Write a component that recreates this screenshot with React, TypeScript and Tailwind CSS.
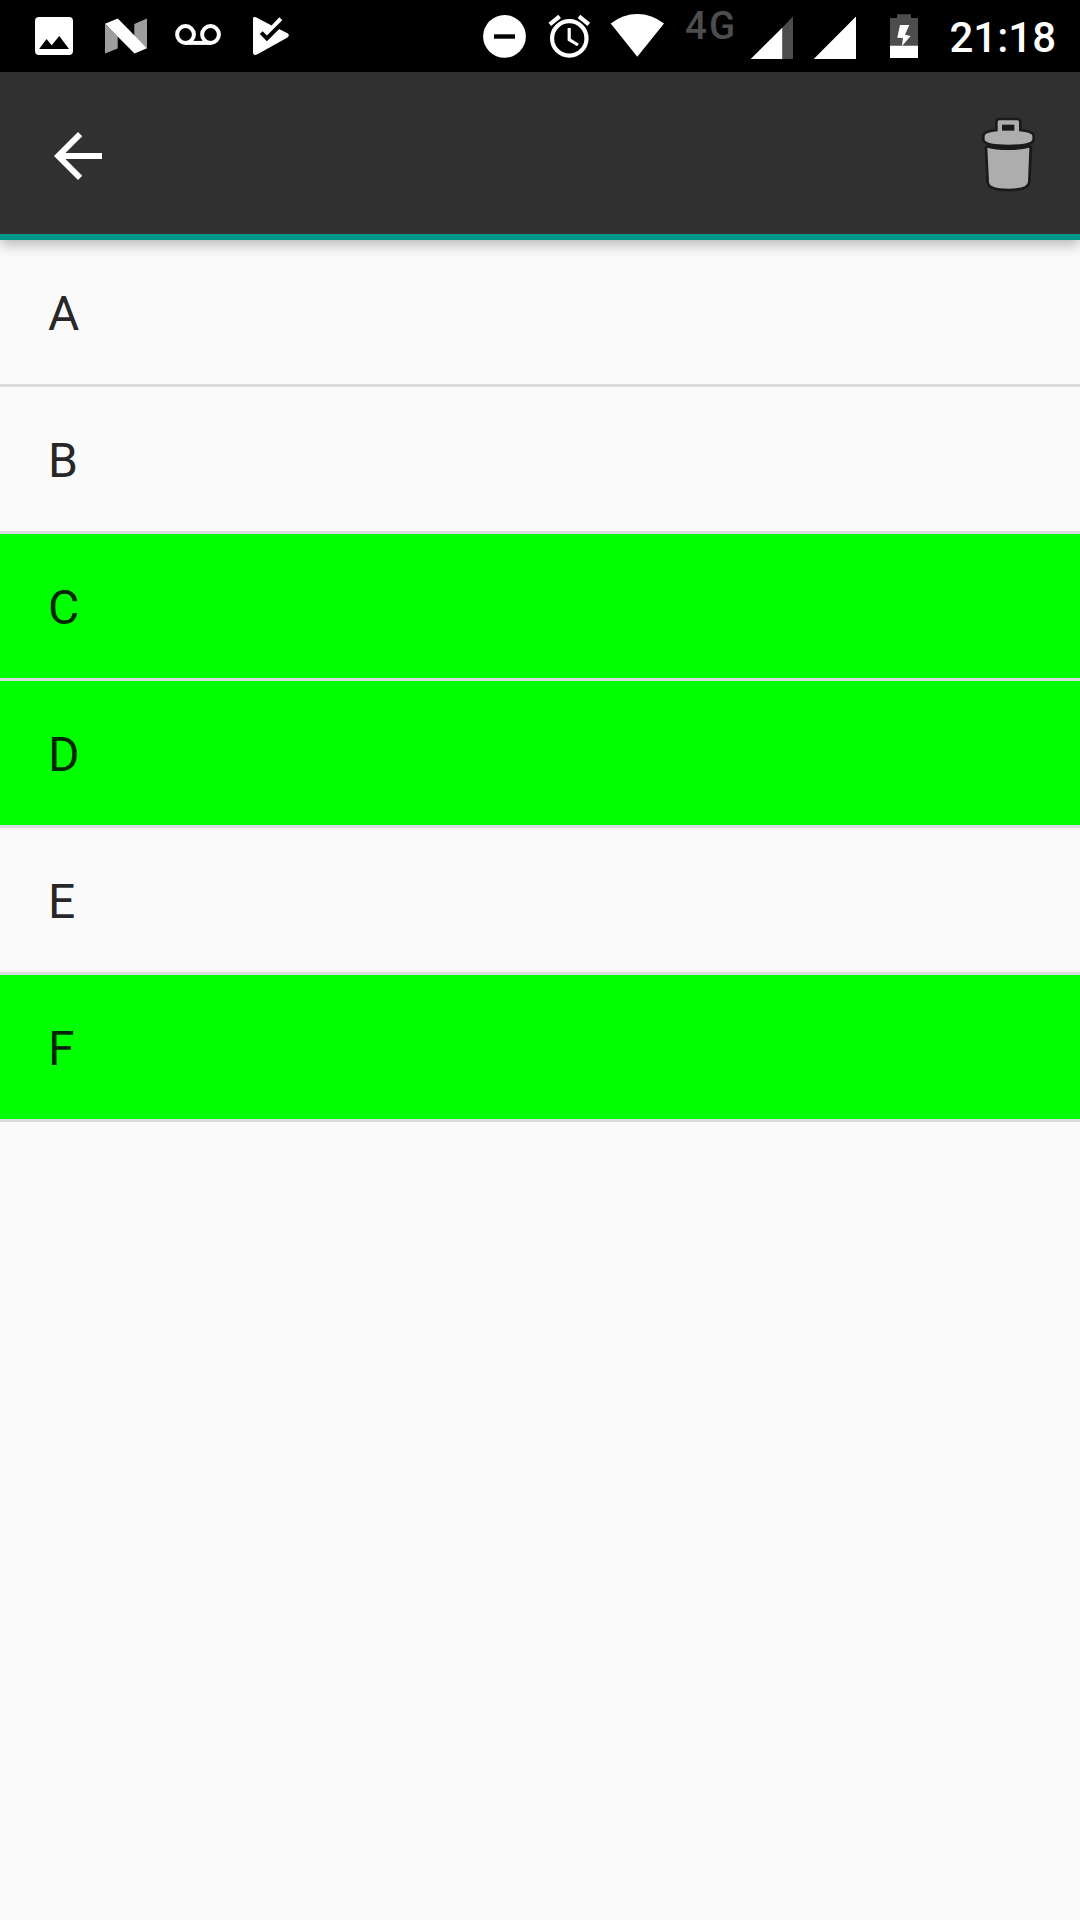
const rows = [
  { label: 'A', selected: false },
  { label: 'B', selected: false },
  { label: 'C', selected: true },
  { label: 'D', selected: true },
  { label: 'E', selected: false },
  { label: 'F', selected: true },
];

function StatusBar() {
  return (
    <div className="flex h-[72px] w-full bg-black pl-[35px] pr-6 text-white">
      <svg className="h-[72px] w-[38px] shrink-0" viewBox="35 0 38 72" fill="currentColor">
        <path fillRule="evenodd" d="M39 17H69a4 4 0 0 1 4 4V51a4 4 0 0 1-4 4H39a4 4 0 0 1-4-4V21a4 4 0 0 1 4-4ZM39.2 49H69L59.3 36 51.7 45.3 46.5 39Z" />
      </svg>
      <svg className="ml-8 h-[72px] w-[42px] shrink-0" viewBox="105 0 42 72">
        <path fill="#9e9e9e" d="M105 24L117.7 36.5V48.5L105 53.5ZM134.3 24L147 18.5V48.3L134.3 36Z" />
        <path fill="#fff" d="M105 23.8L117.8 18.5L147 48.3L134.5 53.5Z" />
      </svg>
      <svg className="ml-7 h-[72px] w-[46px] shrink-0" viewBox="175 0 46 72" fill="none" stroke="currentColor" strokeWidth="4">
        <circle cx="185.5" cy="34.5" r="8.4" />
        <circle cx="210.5" cy="34.5" r="8.4" />
        <path d="M185.5 42.9H210.5" />
      </svg>
      <svg className="ml-8 h-[72px] w-[36px] shrink-0" viewBox="253 0 36 72">
        <path fill="#fff" d="M253 18.5Q253 16.5 256 17.3L271.6 25.4L279.3 17.3L282.3 20.2L277 28L287.5 33.3Q290.2 35.2 287.5 37.6L257 54.5Q253 56 253 52Z" />
        <path fill="#000" d="M259.8 34L262.6 31.2L266.9 35.5L283 19.6L284 24.2L266.9 41.2Z" />
      </svg>
      <svg className="ml-[194px] h-[72px] w-[43px] shrink-0" viewBox="483 0 43 72">
        <circle cx="504.5" cy="36.4" r="21.4" fill="#fff" />
        <path fill="#000" d="M494 34.3H515V38.7H494Z" />
      </svg>
      <svg className="ml-[22px] h-[72px] w-[43px] shrink-0" viewBox="548 0 43 72" fill="none" stroke="currentColor">
        <circle cx="569.3" cy="38.4" r="17.2" strokeWidth="4.2" />
        <path strokeWidth="3.2" d="M569.2 28V39.5L578 45" />
        <path strokeWidth="4.2" d="M549.8 24.3L559.6 16.3M579 16.3L588.8 24.3" />
      </svg>
      <svg className="ml-[19px] h-[72px] w-[54px] shrink-0" viewBox="610 0 54 72" fill="currentColor">
        <path d="M610.7 23.6Q622.5 14 637.3 14T664 23.6L637.3 56.8Z" />
      </svg>
      <span className="ml-[21px] mt-1 w-[52px] shrink-0 whitespace-nowrap font-['Roboto',sans-serif] text-[38.5px] font-medium leading-[44px] tracking-[2px] text-[#4d4d4d]">4G</span>
      <svg className="ml-[13px] h-[72px] w-[43px] shrink-0" viewBox="749.5 0 43 72">
        <path fill="#4d4d4d" d="M792.5 16.5V59H781V28.5Z" />
        <path fill="#fff" d="M750.2 59L781.7 27.8V59Z" />
      </svg>
      <svg className="ml-5 h-[72px] w-[43px] shrink-0" viewBox="812.5 0 43 72" fill="currentColor">
        <path d="M813.2 59L855.5 16.5V59Z" />
      </svg>
      <svg className="ml-[34px] h-[72px] w-[28px] shrink-0" viewBox="890 0 28 72">
        <path fill="#4d4d4d" d="M897 14.3H911V18H918V46H890V18H897Z" />
        <path fill="#fff" d="M890 45.7H918V58H890ZM900 25H909.3L905 34.8L910.6 36L901.8 46.3L903 38L897.3 37.7Z" />
      </svg>
      <span className="ml-auto mt-[13px] whitespace-nowrap font-['Roboto',sans-serif] text-[42px] font-medium leading-[50px]">21:18</span>
    </div>
  );
}

function Toolbar() {
  return (
    <header className="relative z-10 flex h-[168px] items-start justify-between border-b-[6px] border-[#009688] bg-[#303030] pl-[42px] pr-5 shadow-[0_5px_12px_rgba(0,0,0,0.26)]">
      <button aria-label="Back" className="mt-12">
        <svg className="size-[72px]" viewBox="0 0 24 24" fill="#fff">
          <path d="M20 11H7.83l5.59-5.59L12 4l-8 8 8 8 1.41-1.41L7.83 13H20v-2z" />
        </svg>
      </button>
      <button aria-label="Delete" className="mt-7">
        <svg className="size-[100px]" viewBox="0 0 300 300">
          <g fill="#1a1a1a" stroke="#1a1a1a" strokeWidth="16" strokeLinejoin="round">
            <path d="M82 143L87 246Q88 266 145 266Q202 266 204 246L209 143Z" />
            <path d="M113 95V66Q113 61 118 61H172Q177 61 177 66V95Q217 98 217 107V120Q210 134 145 134Q80 134 74 120V107Q74 98 113 95Z" />
          </g>
          <path fill="#adadad" d="M82 143Q105 150 145 150T208 143L204 246Q202 266 145 266Q88 266 87 246Z" />
          <path fill="#adadad" d="M113 94V66Q113 61 118 61H172Q177 61 177 66V94Q217 98 217 107V120Q210 134 145 134Q80 134 74 120V107Q74 98 113 94Z" />
          <path fill="#1a1a1a" d="M126 74H163V92H126Z" />
        </svg>
      </button>
    </header>
  );
}

export default function App() {
  return (
    <div className="flex h-[1920px] w-[1080px] flex-col overflow-hidden bg-[#fafafa] font-['Roboto',sans-serif]">
      <StatusBar />
      <Toolbar />
      <ul>
        {rows.map((row) => (
          <li
            key={row.label}
            className={`flex h-[147px] items-center border-b-[3px] border-[#dbdbdb] pl-12 pt-1 text-[48px] leading-[56px] text-black/87 ${row.selected ? 'bg-[#00ff00]' : 'bg-[#fafafa]'}`}
          >
            {row.label}
          </li>
        ))}
      </ul>
    </div>
  );
}
